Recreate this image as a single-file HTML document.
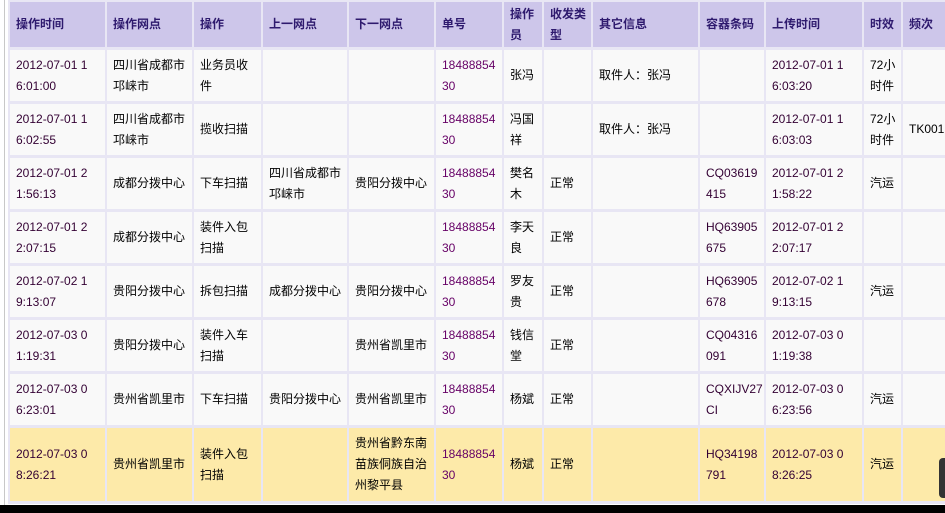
<!DOCTYPE html>
<html><head><meta charset="utf-8"><style>
html,body{margin:0;padding:0;width:945px;height:513px;overflow:hidden;background:#fff;}
.wrap{position:absolute;left:4px;top:0;width:950px;height:505px;border-left:1px solid #c8c8c8;}
table{position:absolute;left:8px;top:-1px;border-spacing:2px 3px;background:#e8e6f4;table-layout:fixed;width:957px;
font-family:"Liberation Sans","WenQuanYi Zen Hei","Noto Sans CJK SC",sans-serif;font-size:12px;line-height:21px;}
td,th{box-sizing:border-box;padding:0 2px 0 6px;vertical-align:middle;text-align:left;overflow:hidden;white-space:nowrap;}
th{background:#cdc6ea;color:#2e1a6e;font-weight:bold;height:45px;font-size:12px;}
td{background:#f9f9f9;color:#000;height:51px;}
tr.hl td{background:#fdeaa9;height:73px;}
.d{color:#330033;}
.n{color:#660066;}
.bar{position:absolute;left:0;top:505px;width:945px;height:8px;background:#000;}
.sc{position:absolute;left:939px;top:458px;width:10px;height:40px;background:#333;border-radius:4px;}
</style></head><body>
<div class="wrap"></div>
<table>
<colgroup><col style="width:95px"><col style="width:85px"><col style="width:67px"><col style="width:84px"><col style="width:85px"><col style="width:66px"><col style="width:38px"><col style="width:47px"><col style="width:105px"><col style="width:64px"><col style="width:96px"><col style="width:37px"><col style="width:60px"></colgroup>
<tr><th>操作时间</th><th>操作网点</th><th>操作</th><th>上一网点</th><th>下一网点</th><th>单号</th><th>操作<br>员</th><th>收发类<br>型</th><th>其它信息</th><th>容器条码</th><th>上传时间</th><th>时效</th><th>频次</th></tr>
<tr><td class="d">2012-07-01 1<br>6:01:00</td><td>四川省成都市<br>邛崃市</td><td>业务员收<br>件</td><td></td><td></td><td class="n">18488854<br>30</td><td>张冯</td><td></td><td>取件人：张冯</td><td></td><td class="d">2012-07-01 1<br>6:03:20</td><td>72小<br>时件</td><td></td></tr>
<tr><td class="d">2012-07-01 1<br>6:02:55</td><td>四川省成都市<br>邛崃市</td><td>揽收扫描</td><td></td><td></td><td class="n">18488854<br>30</td><td>冯国<br>祥</td><td></td><td>取件人：张冯</td><td></td><td class="d">2012-07-01 1<br>6:03:03</td><td>72小<br>时件</td><td>TK001</td></tr>
<tr><td class="d">2012-07-01 2<br>1:56:13</td><td>成都分拨中心</td><td>下车扫描</td><td>四川省成都市<br>邛崃市</td><td>贵阳分拨中心</td><td class="n">18488854<br>30</td><td>樊名<br>木</td><td>正常</td><td></td><td class="d">CQ03619<br>415</td><td class="d">2012-07-01 2<br>1:58:22</td><td>汽运</td><td></td></tr>
<tr><td class="d">2012-07-01 2<br>2:07:15</td><td>成都分拨中心</td><td>装件入包<br>扫描</td><td></td><td></td><td class="n">18488854<br>30</td><td>李天<br>良</td><td>正常</td><td></td><td class="d">HQ63905<br>675</td><td class="d">2012-07-01 2<br>2:07:17</td><td></td><td></td></tr>
<tr><td class="d">2012-07-02 1<br>9:13:07</td><td>贵阳分拨中心</td><td>拆包扫描</td><td>成都分拨中心</td><td>贵阳分拨中心</td><td class="n">18488854<br>30</td><td>罗友<br>贵</td><td>正常</td><td></td><td class="d">HQ63905<br>678</td><td class="d">2012-07-02 1<br>9:13:15</td><td>汽运</td><td></td></tr>
<tr><td class="d">2012-07-03 0<br>1:19:31</td><td>贵阳分拨中心</td><td>装件入车<br>扫描</td><td></td><td>贵州省凯里市</td><td class="n">18488854<br>30</td><td>钱信<br>堂</td><td>正常</td><td></td><td class="d">CQ04316<br>091</td><td class="d">2012-07-03 0<br>1:19:38</td><td></td><td></td></tr>
<tr><td class="d">2012-07-03 0<br>6:23:01</td><td>贵州省凯里市</td><td>下车扫描</td><td>贵阳分拨中心</td><td>贵州省凯里市</td><td class="n">18488854<br>30</td><td>杨斌</td><td>正常</td><td></td><td class="d">CQXIJV27<br>CI</td><td class="d">2012-07-03 0<br>6:23:56</td><td>汽运</td><td></td></tr>
<tr class="hl"><td class="d">2012-07-03 0<br>8:26:21</td><td>贵州省凯里市</td><td>装件入包<br>扫描</td><td></td><td>贵州省黔东南<br>苗族侗族自治<br>州黎平县</td><td class="n">18488854<br>30</td><td>杨斌</td><td>正常</td><td></td><td class="d">HQ34198<br>791</td><td class="d">2012-07-03 0<br>8:26:25</td><td>汽运</td><td></td></tr>
</table>
<div class="sc"></div>
<div class="bar"></div>
</body></html>
